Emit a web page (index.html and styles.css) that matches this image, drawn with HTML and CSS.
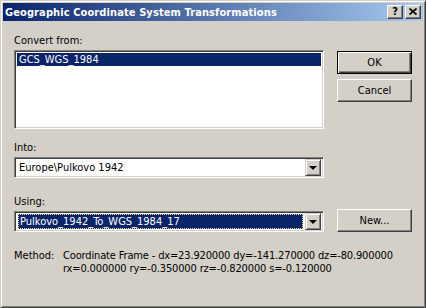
FILE: index.html
```html
<!DOCTYPE html>
<html>
<head>
    <title>Geographic Coordinate System Transformations</title>
    <link rel="stylesheet" href="styles.css">
</head>
<body>
    <div class="window">
        <div class="titlebar">
            <span class="title">Geographic Coordinate System Transformations</span>
            <div class="caption-buttons">
                <div class="cap-btn help">?</div>
                <div class="cap-btn close">
                    <svg width="8" height="7" viewBox="0 0 8 7">
                        <path d="M0.5 0.5 L7.5 6.5 M7.5 0.5 L0.5 6.5" stroke="#000" stroke-width="1.7" fill="none"/>
                    </svg>
                </div>
            </div>
        </div>

        <div class="client">
            <div class="form">
                <div class="left">
                    <div class="label first">Convert from:</div>
                    <div class="listbox sunken">
                        <div class="item selected">GCS_WGS_1984</div>
                    </div>

                    <div class="label">Into:</div>
                    <div class="combo sunken">
                        <div class="combo-text">Europe\Pulkovo 1942</div>
                        <div class="drop-btn"><span class="arrow"></span></div>
                    </div>

                    <div class="label using">Using:</div>
                    <div class="combo sunken">
                        <div class="combo-text focused">Pulkovo_1942_To_WGS_1984_17</div>
                        <div class="drop-btn"><span class="arrow"></span></div>
                    </div>
                </div>

                <div class="right">
                    <div class="btn default"><span>OK</span></div>
                    <div class="btn"><span>Cancel</span></div>
                    <div class="btn new"><span>New...</span></div>
                </div>
            </div>

            <div class="method">
                <div class="method-label">Method:</div>
                <div class="method-value">
                    <div>Coordinate Frame - dx=23.920000 dy=-141.270000 dz=-80.900000</div>
                    <div>rx=0.000000 ry=-0.350000 rz=-0.820000 s=-0.120000</div>
                </div>
            </div>
        </div>
    </div>
</body>
</html>
```

FILE: styles.css
```css
body {
    margin: 0;
    background: #d4d0c8;
    font-family: "DejaVu Sans Condensed", "Liberation Sans", sans-serif;
    font-size: 11px;
    color: #000;
}
.window {
    width: 426px;
    height: 308px;
    box-sizing: border-box;
    background: #d4d0c8;
    border: 1px solid;
    border-color: #d4d0c8 #404040 #404040 #d4d0c8;
    box-shadow: inset 1px 1px 0 #fff, inset -1px -1px 0 #808080;
    padding: 2px;
}
.titlebar {
    height: 18px;
    display: flex;
    align-items: center;
    background: linear-gradient(to right, #0a246a, #a6caf0);
    color: #fff;
    padding-left: 2px;
}
.title {
    flex: 1;
    font-weight: bold;
    white-space: nowrap;
    letter-spacing: 0.1px;
}
.caption-buttons {
    display: flex;
    gap: 2px;
    margin-right: 2px;
}
.cap-btn {
    width: 16px;
    height: 14px;
    box-sizing: border-box;
    background: #d4d0c8;
    border: 1px solid;
    border-color: #fff #404040 #404040 #fff;
    box-shadow: inset -1px -1px 0 #808080;
    display: flex;
    align-items: center;
    justify-content: center;
    color: #000;
    font-weight: bold;
    font-size: 11px;
    line-height: 12px;
}
.close svg {
    display: block;
    margin-top: -1px;
}
.client {
    padding: 13px 11px 0 11px;
}
.form {
    display: flex;
    gap: 13px;
}
.left {
    width: 310px;
    display: flex;
    flex-direction: column;
}
.label {
    height: 13px;
    line-height: 13px;
    margin-top: 12px;
    margin-bottom: 3px;
}
.label.first {
    margin-top: 0;
}
.label.using {
    margin-top: 17px;
}
.sunken {
    box-sizing: border-box;
    border: 1px solid;
    border-color: #808080 #fff #fff #808080;
    box-shadow: inset 1px 1px 0 #404040, inset -1px -1px 0 #d4d0c8;
    background: #fff;
}
.listbox {
    height: 79px;
    padding: 2px;
}
.item {
    height: 13px;
    line-height: 13px;
    padding-left: 2px;
}
.selected {
    background: #0a246a;
    color: #fff;
}
.combo {
    height: 21px;
    display: flex;
    align-items: center;
    padding: 2px;
}
.combo-text {
    flex: 1;
    height: 15px;
    line-height: 15px;
    padding-left: 2px;
    box-sizing: border-box;
    margin-right: 1px;
}
.combo-text.focused {
    background: #0a246a;
    color: #fff;
    outline: 1px dotted #f5db95;
    outline-offset: -1px;
    margin: 0 2px 0 1px;
}
.drop-btn {
    width: 16px;
    height: 17px;
    box-sizing: border-box;
    background: #d4d0c8;
    border: 1px solid;
    border-color: #d4d0c8 #404040 #404040 #d4d0c8;
    box-shadow: inset 1px 1px 0 #fff, inset -1px -1px 0 #808080;
    display: flex;
    align-items: center;
    justify-content: center;
}
.arrow {
    width: 0;
    height: 0;
    border-left: 4px solid transparent;
    border-right: 4px solid transparent;
    border-top: 4px solid #000;
    margin-top: 1px;
}
.right {
    width: 75px;
    display: flex;
    flex-direction: column;
    padding-top: 17px;
}
.btn {
    height: 23px;
    box-sizing: border-box;
    background: #d4d0c8;
    border: 1px solid;
    border-color: #fff #404040 #404040 #fff;
    box-shadow: inset -1px -1px 0 #808080;
    display: flex;
    align-items: center;
    justify-content: center;
    margin-bottom: 5px;
}
.btn.default {
    border: 1px solid #000;
    box-shadow: inset 1px 1px 0 #fff, inset -1px -1px 0 #404040, inset -2px -2px 0 #808080;
}
.btn.new {
    margin-top: auto;
    margin-bottom: 0;
}
.method {
    display: flex;
    margin-top: 17px;
    line-height: 13px;
}
.method-label {
    width: 49px;
}
.method-value {
    letter-spacing: -0.15px;
}
```
